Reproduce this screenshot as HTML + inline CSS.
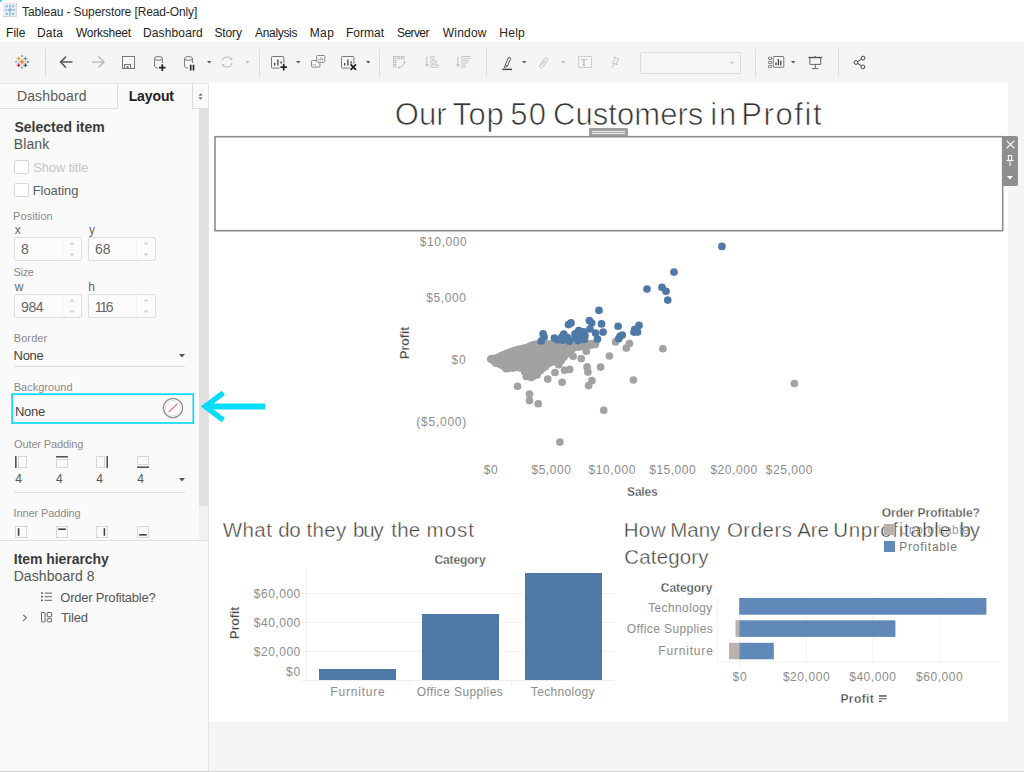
<!DOCTYPE html>
<html><head><meta charset="utf-8"><title>Tableau - Superstore [Read-Only]</title>
<style>
html,body{margin:0;padding:0;}
body{width:1024px;height:772px;overflow:hidden;background:#f5f5f5;position:relative;font-family:"Liberation Sans",sans-serif;}
.t{position:absolute;white-space:nowrap;line-height:1;}
.r{position:absolute;}
svg{position:absolute;overflow:visible;}
</style></head><body>
<div class="r" style="left:0px;top:0px;width:1024px;height:42px;background:#fff;"></div>
<div class="r" style="left:0px;top:42px;width:1024px;height:41px;background:#f5f5f5;"></div>
<div class="r" style="left:0px;top:83px;width:208px;height:689px;background:#fafafa;"></div>
<div class="r" style="left:208px;top:83px;width:1px;height:689px;background:#e4e4e4;"></div>
<div class="r" style="left:209px;top:83px;width:799px;height:639px;background:#fff;"></div>
<div class="r" style="left:0px;top:771px;width:1024px;height:1px;background:#d4d4d4;"></div>
<div class="r" style="left:0px;top:0px;width:2px;height:2px;background:#19d3f3;border-radius:0 0 2px 0;"></div>
<svg style="left:3px;top:3px" width="14" height="14" viewBox="0 0 14 14"><rect x="0" y="0" width="14" height="14" fill="#ececec"/><rect x="0" y="13" width="14" height="1" fill="#d0d0d0"/><rect x="13" y="0" width="1" height="14" fill="#d8d8d8"/><g fill="#7db4e6"><rect x="6.3" y="1.5" width="1.4" height="3"/><rect x="6.3" y="9.5" width="1.4" height="3"/><rect x="5" y="6.3" width="4" height="1.4"/><rect x="6.3" y="5" width="1.4" height="4"/><rect x="2" y="6.3" width="2.4" height="1.4"/><rect x="9.6" y="6.3" width="2.4" height="1.4"/><rect x="2.6" y="2.6" width="2.2" height="1.2"/><rect x="3.1" y="2.1" width="1.2" height="2.2"/><rect x="9.2" y="2.6" width="2.2" height="1.2"/><rect x="9.7" y="2.1" width="1.2" height="2.2"/><rect x="2.6" y="10.2" width="2.2" height="1.2"/><rect x="3.1" y="9.7" width="1.2" height="2.2"/><rect x="9.2" y="10.2" width="2.2" height="1.2"/><rect x="9.7" y="9.7" width="1.2" height="2.2"/></g></svg>
<div class="t" style="left:22.05px;top:6.00px;font-size:12px;color:#2a2a2a;letter-spacing:-0.113px;">Tableau - Superstore [Read-Only]</div>
<div class="t" style="left:6.00px;top:27.00px;font-size:12px;color:#222;letter-spacing:0.062px;">File</div>
<div class="t" style="left:37.00px;top:27.00px;font-size:12px;color:#222;letter-spacing:0.208px;">Data</div>
<div class="t" style="left:75.94px;top:27.00px;font-size:12px;color:#222;letter-spacing:-0.250px;">Worksheet</div>
<div class="t" style="left:143.00px;top:27.00px;font-size:12px;color:#222;letter-spacing:0.133px;">Dashboard</div>
<div class="t" style="left:214.44px;top:27.00px;font-size:12px;color:#222;letter-spacing:-0.109px;">Story</div>
<div class="t" style="left:255.00px;top:27.00px;font-size:12px;color:#222;letter-spacing:-0.321px;">Analysis</div>
<div class="t" style="left:309.70px;top:27.00px;font-size:12px;color:#222;letter-spacing:0.412px;">Map</div>
<div class="t" style="left:346.00px;top:27.00px;font-size:12px;color:#222;letter-spacing:0.013px;">Format</div>
<div class="t" style="left:396.94px;top:27.00px;font-size:12px;color:#222;letter-spacing:-0.565px;">Server</div>
<div class="t" style="left:442.74px;top:27.00px;font-size:12px;color:#222;letter-spacing:0.215px;">Window</div>
<div class="t" style="left:499.20px;top:27.00px;font-size:12px;color:#222;letter-spacing:0.304px;">Help</div>
<div class="r" style="left:45px;top:49px;width:1px;height:28px;background:#dedede;"></div>
<div class="r" style="left:259px;top:49px;width:1px;height:28px;background:#dedede;"></div>
<div class="r" style="left:379px;top:49px;width:1px;height:28px;background:#dedede;"></div>
<div class="r" style="left:485.5px;top:49px;width:1px;height:28px;background:#dedede;"></div>
<div class="r" style="left:755px;top:49px;width:1px;height:28px;background:#dedede;"></div>
<div class="r" style="left:838px;top:49px;width:1px;height:28px;background:#dedede;"></div>
<svg style="left:14px;top:54px" width="16" height="16" viewBox="0 0 16 16"><path d="M5.4 7.9 H10.6 M8 5.3 V10.5" stroke="#e8762d" stroke-width="1.3"/><path d="M2.7 4.6 H6.5 M4.6 2.7 V6.5" stroke="#eb9c3b" stroke-width="1.1"/><path d="M9.5 4.6 H13.3 M11.4 2.7 V6.5" stroke="#5b9fb5" stroke-width="1.1"/><path d="M2.7 11.2 H6.5 M4.6 9.3 V13.1" stroke="#c72035" stroke-width="1.1"/><path d="M9.5 11.2 H13.3 M11.4 9.3 V13.1" stroke="#1f447e" stroke-width="1.1"/><path d="M6.8 2.1 H9.2 M8 0.9 V3.3" stroke="#6aa3b8" stroke-width="0.9"/><path d="M6.8 13.7 H9.2 M8 12.5 V14.9" stroke="#7b8fb5" stroke-width="0.9"/><path d="M1 7.9 H3.4 M2.2 6.7 V9.1" stroke="#7fa8c9" stroke-width="0.9"/><path d="M12.6 7.9 H15 M13.8 6.7 V9.1" stroke="#59649b" stroke-width="0.9"/></svg>
<svg style="left:59px;top:55px" width="15" height="14" viewBox="0 0 15 14"><path d="M13.5 7.1 H1.6 M7 1.6 L1.5 7.1 L7 12.6" stroke="#5a5a5a" stroke-width="1.5" fill="none"/></svg>
<svg style="left:90.5px;top:55px" width="15" height="14" viewBox="0 0 15 14"><path d="M1 7.1 H12.9 M7.5 1.6 L13 7.1 L7.5 12.6" stroke="#b4b4b4" stroke-width="1.4" fill="none"/></svg>
<svg style="left:122px;top:56px" width="13" height="13" viewBox="0 0 13 13"><rect x="0.5" y="0.5" width="12" height="12" fill="none" stroke="#777" stroke-width="1"/><rect x="2.5" y="8.5" width="6" height="4" fill="none" stroke="#777" stroke-width="1"/><rect x="4.5" y="10" width="2" height="2" fill="#777"/></svg>
<svg style="left:154px;top:55.6px" width="14" height="16" viewBox="0 0 14 16"><path d="M0.6 2.4 V10 C0.6 11.3 2.2 12 4 12.1 M8.4 2.4 V7" fill="none" stroke="#777" stroke-width="1"/><ellipse cx="4.5" cy="2.4" rx="3.9" ry="1.9" fill="none" stroke="#777" stroke-width="1"/><path d="M5 11.6 H11.6 M8.3 8.3 V14.9" stroke="#222" stroke-width="1.7"/></svg>
<svg style="left:184px;top:55.6px" width="14" height="16" viewBox="0 0 14 16"><path d="M0.6 2.4 V10 C0.6 11.3 2.2 12 4 12.1 M8.4 2.4 V7" fill="none" stroke="#777" stroke-width="1"/><ellipse cx="4.5" cy="2.4" rx="3.9" ry="1.9" fill="none" stroke="#777" stroke-width="1"/><path d="M6.7 8.8 V14.6 M9.5 8.8 V14.6" stroke="#222" stroke-width="1.6"/></svg>
<svg style="left:206.5px;top:61px" width="4.4" height="2.6" viewBox="0 0 4.4 2.6"><path d="M0 0 L4.4 0 L2.2 2.6Z" fill="#555"/></svg>
<svg style="left:220px;top:55px" width="14" height="14" viewBox="0 0 14 14"><path d="M2 6 A5.2 5.2 0 0 1 11.6 4.6 M12 8 A5.2 5.2 0 0 1 2.4 9.4" fill="none" stroke="#bdbdbd" stroke-width="1.1"/><path d="M12.6 2.4 L11.8 5.2 L9.2 4.2Z M1.4 11.6 L2.2 8.8 L4.8 9.8Z" fill="#bdbdbd"/></svg>
<svg style="left:244.8px;top:61px" width="4.4" height="2.6" viewBox="0 0 4.4 2.6"><path d="M0 0 L4.4 0 L2.2 2.6Z" fill="#bdbdbd"/></svg>
<svg style="left:271px;top:56px" width="17" height="16" viewBox="0 0 17 16"><rect x="0.5" y="0.5" width="12.4" height="11.6" rx="0.8" fill="none" stroke="#777" stroke-width="1"/><path d="M3.6 9.6 V7 M6.9 9.6 V3.6 M10.1 9.6 V5.2" stroke="#444" stroke-width="1.3"/><rect x="8.6" y="7.6" width="8" height="8" fill="#f5f5f5"/><path d="M9.4 11.2 H16 M12.7 7.9 V14.5" stroke="#222" stroke-width="1.7"/></svg>
<svg style="left:296px;top:61.2px" width="4.4" height="2.6" viewBox="0 0 4.4 2.6"><path d="M0 0 L4.4 0 L2.2 2.6Z" fill="#555"/></svg>
<svg style="left:311px;top:55px" width="15" height="13" viewBox="0 0 15 13"><rect x="0.5" y="5.5" width="8.4" height="6.6" rx="0.8" fill="none" stroke="#8a8a8a" stroke-width="1"/><rect x="5.6" y="0.5" width="8.2" height="6.8" rx="0.8" fill="#f5f5f5" stroke="#8a8a8a" stroke-width="1"/><path d="M8 5.4 V3.8 M9.8 5.4 V2.4 M11.6 5.4 V3.2 M2.8 10.4 V9 M4.6 10.4 V9.2" stroke="#8a8a8a" stroke-width="0.9"/></svg>
<svg style="left:341px;top:56px" width="17" height="16" viewBox="0 0 17 16"><rect x="0.5" y="0.5" width="12.4" height="11.6" rx="0.8" fill="none" stroke="#777" stroke-width="1"/><path d="M3.6 9.6 V7 M6.9 9.6 V3.6 M10.1 9.6 V5.2" stroke="#444" stroke-width="1.3"/><rect x="8.6" y="7.6" width="8" height="8" fill="#f5f5f5"/><path d="M9.6 8.4 L15 13.8 M15 8.4 L9.6 13.8" stroke="#222" stroke-width="1.8"/></svg>
<svg style="left:365.6px;top:61.2px" width="4.4" height="2.6" viewBox="0 0 4.4 2.6"><path d="M0 0 L4.4 0 L2.2 2.6Z" fill="#555"/></svg>
<svg style="left:393.4px;top:56.2px" width="14" height="14" viewBox="0 0 14 14"><rect x="0.5" y="0.5" width="2.4" height="2.4" fill="none" stroke="#bdbdbd" stroke-width="0.9"/><rect x="4.5" y="0.5" width="2.4" height="2.4" fill="none" stroke="#bdbdbd" stroke-width="0.9"/><rect x="8.5" y="0.5" width="2.4" height="2.4" fill="none" stroke="#bdbdbd" stroke-width="0.9"/><rect x="0.5" y="4.5" width="2.4" height="2.4" fill="none" stroke="#bdbdbd" stroke-width="0.9"/><rect x="0.5" y="8.5" width="2.4" height="2.4" fill="none" stroke="#bdbdbd" stroke-width="0.9"/><path d="M5.4 11.6 C9 11 11 9 11.6 6" fill="none" stroke="#bdbdbd" stroke-width="1"/><path d="M4.2 11.8 L6.6 10.2 L6.8 12.8Z M11.8 4.6 L10 6.8 L13 7Z" fill="#bdbdbd"/></svg>
<svg style="left:425px;top:56.4px" width="16" height="12" viewBox="0 0 16 12"><path d="M1.9 0.5 V10" stroke="#bdbdbd" stroke-width="1"/><path d="M0 8.2 L3.8 8.2 L1.9 11.2Z" fill="#bdbdbd"/><rect x="5.5" y="0.5" width="3.6" height="2.4" rx="0.7" fill="none" stroke="#bdbdbd" stroke-width="0.9"/><rect x="5.5" y="4.7" width="6" height="2.4" rx="0.7" fill="none" stroke="#bdbdbd" stroke-width="0.9"/><rect x="5.5" y="8.9" width="8.2" height="2.4" rx="0.7" fill="none" stroke="#bdbdbd" stroke-width="0.9"/></svg>
<svg style="left:456.2px;top:56.4px" width="16" height="12" viewBox="0 0 16 12"><path d="M1.9 0.5 V10" stroke="#bdbdbd" stroke-width="1"/><path d="M0 8.2 L3.8 8.2 L1.9 11.2Z" fill="#bdbdbd"/><rect x="5.5" y="0.5" width="8.6" height="2.4" rx="0.7" fill="none" stroke="#bdbdbd" stroke-width="0.9"/><rect x="5.5" y="4.7" width="6.2" height="2.4" rx="0.7" fill="none" stroke="#bdbdbd" stroke-width="0.9"/><rect x="5.5" y="8.9" width="3.8" height="2.4" rx="0.7" fill="none" stroke="#bdbdbd" stroke-width="0.9"/></svg>
<svg style="left:502px;top:56px" width="11" height="15" viewBox="0 0 11 15"><path d="M3.2 9.2 L6.6 1.2 L8.8 2.2 L5.4 10.2Z" fill="none" stroke="#5a5a5a" stroke-width="1"/><path d="M3.2 9.2 L2.2 11.4 L4 11.2 L5.4 10.2" fill="none" stroke="#5a5a5a" stroke-width="0.9"/><path d="M0.3 13.4 H10" stroke="#444" stroke-width="1.5"/></svg>
<svg style="left:522.1px;top:61.1px" width="4.4" height="2.6" viewBox="0 0 4.4 2.6"><path d="M0 0 L4.4 0 L2.2 2.6Z" fill="#555"/></svg>
<svg style="left:538px;top:55.5px" width="12" height="13" viewBox="0 0 12 13"><path d="M2.4 9.2 L7 2.4 C8.2 0.7 10.8 2.2 9.6 4.2 L5 11 C3.6 13 0.6 11.2 2 9 L6.2 3.2" fill="none" stroke="#bdbdbd" stroke-width="0.9"/><path d="M4 9.4 L7.8 3.8" fill="none" stroke="#bdbdbd" stroke-width="0.8"/></svg>
<svg style="left:561.2px;top:61.1px" width="4.4" height="2.6" viewBox="0 0 4.4 2.6"><path d="M0 0 L4.4 0 L2.2 2.6Z" fill="#bdbdbd"/></svg>
<svg style="left:578px;top:56px" width="14" height="12" viewBox="0 0 14 12"><rect x="0.5" y="0.5" width="13" height="11" fill="none" stroke="#b4b4b4" stroke-width="1" stroke-dasharray="1.5 1"/></svg>
<div class="t" style="left:580.6px;top:56.6px;font-size:11px;color:#b0b0b0;font-family:'Liberation Serif',serif;">T</div>
<svg style="left:608.5px;top:55.5px" width="11" height="13" viewBox="0 0 11 13"><path d="M5.2 0.8 L10 3.4 L8.8 4.4 L7.6 7.2 L8.2 8.8 L3 6.6 L4.8 5.8 L6 3 Z M5.4 7.8 L2.6 12" fill="none" stroke="#bdbdbd" stroke-width="0.9" stroke-linejoin="round"/></svg>
<div class="r" style="left:640px;top:52px;width:99px;height:19.5px;background:#f6f6f6;border:1px solid #dcdcdc;border-radius:2px;"></div>
<svg style="left:729.7px;top:61.5px" width="4.4" height="2.6" viewBox="0 0 4.4 2.6"><path d="M0 0 L4.4 0 L2.2 2.6Z" fill="#c8c8c8"/></svg>
<svg style="left:768px;top:56px" width="17" height="12" viewBox="0 0 17 12"><rect x="0.5" y="1.2" width="3" height="2.2" rx="0.3" fill="none" stroke="#777" stroke-width="0.9"/><rect x="0.5" y="5.4" width="3" height="2.2" rx="0.3" fill="none" stroke="#777" stroke-width="0.9"/><rect x="0.5" y="9.4" width="3" height="2.2" rx="0.3" fill="none" stroke="#777" stroke-width="0.9"/><rect x="5.2" y="0.5" width="10.6" height="10.8" rx="0.8" fill="none" stroke="#777" stroke-width="1"/><path d="M8 9.2 V6.6 M10.4 9.2 V3 M12.8 9.2 V4.8" stroke="#444" stroke-width="1.3"/></svg>
<svg style="left:791.2px;top:61.2px" width="4.4" height="2.6" viewBox="0 0 4.4 2.6"><path d="M0 0 L4.4 0 L2.2 2.6Z" fill="#555"/></svg>
<svg style="left:808px;top:55.5px" width="15" height="14" viewBox="0 0 15 14"><path d="M0.4 1.5 H14.2" stroke="#555" stroke-width="1.4"/><path d="M1.9 2 V8.4 H12.7 V2" fill="none" stroke="#666" stroke-width="1"/><path d="M7.3 8.4 V12.4 M4.2 12.6 H10.4" stroke="#666" stroke-width="1"/><path d="M7.3 0 V1.4" stroke="#555" stroke-width="1"/></svg>
<svg style="left:853px;top:55px" width="14" height="15" viewBox="0 0 14 15"><path d="M3.2 7.5 L10 3.2 M3.2 7.5 L10 11.8" stroke="#444" stroke-width="1"/><circle cx="10.1" cy="3.1" r="1.9" fill="#f5f5f5" stroke="#444" stroke-width="1"/><circle cx="3" cy="7.5" r="1.9" fill="#f5f5f5" stroke="#444" stroke-width="1"/><circle cx="9.9" cy="11.9" r="1.9" fill="#f5f5f5" stroke="#444" stroke-width="1"/></svg>
<div class="r" style="left:0px;top:108px;width:118px;height:1px;background:#dcdcdc;"></div>
<div class="r" style="left:117px;top:84px;width:1px;height:25px;background:#dcdcdc;"></div>
<div class="r" style="left:192px;top:84px;width:1px;height:25px;background:#dcdcdc;"></div>
<div class="r" style="left:192px;top:108px;width:17px;height:1px;background:#dcdcdc;"></div>
<div class="r" style="left:0px;top:83px;width:209px;height:1px;background:#e6e6e6;"></div>
<div class="t" style="left:16.88px;top:89.00px;font-size:14px;color:#5a5a5a;letter-spacing:0.145px;">Dashboard</div>
<div class="t" style="left:128.66px;top:89.00px;font-size:14px;color:#222;font-weight:bold;letter-spacing:-0.103px;">Layout</div>
<svg style="left:198px;top:92.5px" width="5" height="7" viewBox="0 0 5 7"><path d="M0.4 2.6 L2.5 0.4 L4.6 2.6Z M0.4 4.4 L2.5 6.6 L4.6 4.4Z" fill="#556"/></svg>
<div class="r" style="left:199px;top:109px;width:9px;height:431px;background:#f1f1f1;"></div>
<div class="r" style="left:199px;top:109px;width:9px;height:397px;background:#e0e0e0;"></div>
<div class="t" style="left:14.43px;top:120.00px;font-size:14px;color:#3a3a3a;font-weight:bold;letter-spacing:0.000px;">Selected item</div>
<div class="t" style="left:13.68px;top:137.00px;font-size:14px;color:#555;letter-spacing:0.131px;">Blank</div>
<div class="r" style="left:14px;top:160px;width:13px;height:12px;background:#fff;border:1px solid #d8d8d8;border-radius:2px;"></div>
<div class="r" style="left:14px;top:183px;width:13px;height:12px;background:#fff;border:1px solid #d8d8d8;border-radius:2px;"></div>
<div class="t" style="left:33.17px;top:161.00px;font-size:13px;color:#c4c4c4;letter-spacing:-0.132px;">Show title</div>
<div class="t" style="left:32.74px;top:184.00px;font-size:13px;color:#5c5c5c;letter-spacing:-0.087px;">Floating</div>
<div class="t" style="left:13.12px;top:211.00px;font-size:11px;color:#8a8a8a;letter-spacing:0.062px;">Position</div>
<div class="t" style="left:14.68px;top:224.00px;font-size:12px;color:#666;">x</div>
<div class="t" style="left:88.94px;top:224.00px;font-size:12px;color:#666;">y</div>
<div class="r" style="left:14px;top:237px;width:66px;height:22px;background:#fcfcfc;border:1px solid #ddd;border-radius:2px;"></div>
<div class="r" style="left:62px;top:238px;width:1px;height:22px;background:#f3f3f3;"></div>
<svg style="left:69px;top:241px" width="6" height="16" viewBox="0 0 6 16"><path d="M0.5 3.5 L3 0.8 L5.5 3.5Z M0.5 12.5 L3 15.2 L5.5 12.5Z" fill="#d2d2d2"/></svg>
<div class="t" style="left:21.12px;top:242.00px;font-size:14px;color:#666;">8</div>
<div class="r" style="left:88px;top:237px;width:66px;height:22px;background:#fcfcfc;border:1px solid #ddd;border-radius:2px;"></div>
<div class="r" style="left:136px;top:238px;width:1px;height:22px;background:#f3f3f3;"></div>
<svg style="left:143px;top:241px" width="6" height="16" viewBox="0 0 6 16"><path d="M0.5 3.5 L3 0.8 L5.5 3.5Z M0.5 12.5 L3 15.2 L5.5 12.5Z" fill="#d2d2d2"/></svg>
<div class="t" style="left:95.06px;top:242.00px;font-size:14px;color:#666;letter-spacing:-0.012px;">68</div>
<div class="t" style="left:13.50px;top:267.00px;font-size:11px;color:#8a8a8a;letter-spacing:-0.312px;">Size</div>
<div class="t" style="left:14.80px;top:281.00px;font-size:12px;color:#666;">w</div>
<div class="t" style="left:88.19px;top:281.00px;font-size:12px;color:#666;">h</div>
<div class="r" style="left:14px;top:294px;width:66px;height:22px;background:#fcfcfc;border:1px solid #ddd;border-radius:2px;"></div>
<div class="r" style="left:62px;top:295px;width:1px;height:22px;background:#f3f3f3;"></div>
<svg style="left:69px;top:298px" width="6" height="16" viewBox="0 0 6 16"><path d="M0.5 3.5 L3 0.8 L5.5 3.5Z M0.5 12.5 L3 15.2 L5.5 12.5Z" fill="#d2d2d2"/></svg>
<div class="t" style="left:21.12px;top:300.00px;font-size:14px;color:#666;letter-spacing:-0.456px;">984</div>
<div class="r" style="left:88px;top:294px;width:66px;height:22px;background:#fcfcfc;border:1px solid #ddd;border-radius:2px;"></div>
<div class="r" style="left:136px;top:295px;width:1px;height:22px;background:#f3f3f3;"></div>
<svg style="left:143px;top:298px" width="6" height="16" viewBox="0 0 6 16"><path d="M0.5 3.5 L3 0.8 L5.5 3.5Z M0.5 12.5 L3 15.2 L5.5 12.5Z" fill="#d2d2d2"/></svg>
<div class="t" style="left:94.69px;top:300.00px;font-size:14px;color:#666;letter-spacing:-1.744px;">116</div>
<div class="t" style="left:13.72px;top:333.00px;font-size:11px;color:#8a8a8a;letter-spacing:0.100px;">Border</div>
<div class="t" style="left:13.54px;top:349.00px;font-size:13px;color:#444;letter-spacing:-0.267px;">None</div>
<svg style="left:179px;top:354px" width="6" height="4" viewBox="0 0 6 4"><path d="M0 0 L6 0 L3 3.6Z" fill="#555"/></svg>
<div class="r" style="left:14px;top:366px;width:171px;height:1px;background:#dcdcdc;"></div>
<div class="t" style="left:13.72px;top:382.00px;font-size:11px;color:#8a8a8a;letter-spacing:0.008px;">Background</div>
<svg style="left:0;top:0" width="210" height="772" viewBox="0 0 210 772"><rect x="12.1" y="394.1" width="181.2" height="28.9" fill="none" stroke="#10d8f8" stroke-width="1.7"/></svg>
<div class="t" style="left:15.04px;top:405.00px;font-size:13px;color:#444;letter-spacing:-0.333px;">None</div>
<svg style="left:162px;top:397px" width="22" height="22" viewBox="0 0 22 22"><circle cx="11" cy="11" r="9.6" fill="#fff" stroke="#909090" stroke-width="1.4"/><circle cx="11" cy="11" r="7.6" fill="none" stroke="#e2e2e2" stroke-width="1"/><path d="M6.8 14.8 L15.4 6.6" stroke="#e0606a" stroke-width="1.1"/></svg>
<svg style="left:0;top:0" width="300" height="772" viewBox="0 0 300 772"><path d="M204 406.5 H265" stroke="#08dcf8" stroke-width="6" fill="none"/><path d="M223.3 392.8 L205.2 406.5 L223.3 420.2" stroke="#08dcf8" stroke-width="5.4" fill="none" stroke-linejoin="miter"/></svg>
<div class="t" style="left:14.10px;top:439.00px;font-size:11px;color:#8a8a8a;letter-spacing:-0.146px;">Outer Padding</div>
<svg style="left:15px;top:456.3px" width="13" height="13" viewBox="0 0 13 13"><rect x="3.5" y="0.5" width="8" height="11" fill="none" stroke="#d6d6d6" stroke-width="1"/><path d="M0.8 0 L0.8 12" stroke="#555" stroke-width="1.6"/></svg>
<div class="t" style="left:15.35px;top:473.00px;font-size:12px;color:#555;">4</div>
<svg style="left:15px;top:526.2px" width="13" height="13" viewBox="0 0 13 13"><rect x="0.5" y="0.5" width="11" height="11" fill="none" stroke="#d6d6d6" stroke-width="1"/><path d="M3.6 2.2 L3.6 9.8" stroke="#444" stroke-width="1.6"/></svg>
<svg style="left:55.6px;top:456.3px" width="13" height="13" viewBox="0 0 13 13"><rect x="0.5" y="3.5" width="11" height="8" fill="none" stroke="#d6d6d6" stroke-width="1"/><path d="M0 0.8 L12 0.8" stroke="#555" stroke-width="1.6"/></svg>
<div class="t" style="left:55.95px;top:473.00px;font-size:12px;color:#555;">4</div>
<svg style="left:55.6px;top:526.2px" width="13" height="13" viewBox="0 0 13 13"><rect x="0.5" y="0.5" width="11" height="11" fill="none" stroke="#d6d6d6" stroke-width="1"/><path d="M2.2 3.2 L9.8 3.2" stroke="#444" stroke-width="1.6"/></svg>
<svg style="left:96px;top:456.3px" width="13" height="13" viewBox="0 0 13 13"><rect x="0.5" y="0.5" width="8" height="11" fill="none" stroke="#d6d6d6" stroke-width="1"/><path d="M11.2 0 L11.2 12" stroke="#555" stroke-width="1.6"/></svg>
<div class="t" style="left:96.35px;top:473.00px;font-size:12px;color:#555;">4</div>
<svg style="left:96px;top:526.2px" width="13" height="13" viewBox="0 0 13 13"><rect x="0.5" y="0.5" width="11" height="11" fill="none" stroke="#d6d6d6" stroke-width="1"/><path d="M8.4 2.2 L8.4 9.8" stroke="#444" stroke-width="1.6"/></svg>
<svg style="left:136.8px;top:456.3px" width="13" height="13" viewBox="0 0 13 13"><rect x="0.5" y="0.5" width="11" height="8" fill="none" stroke="#d6d6d6" stroke-width="1"/><path d="M0 11.2 L12 11.2" stroke="#555" stroke-width="1.6"/></svg>
<div class="t" style="left:137.15px;top:473.00px;font-size:12px;color:#555;">4</div>
<svg style="left:136.8px;top:526.2px" width="13" height="13" viewBox="0 0 13 13"><rect x="0.5" y="0.5" width="11" height="11" fill="none" stroke="#d6d6d6" stroke-width="1"/><path d="M2.2 8.8 L9.8 8.8" stroke="#444" stroke-width="1.6"/></svg>
<svg style="left:179px;top:477.5px" width="6" height="4" viewBox="0 0 6 4"><path d="M0 0 L6 0 L3 3.6Z" fill="#555"/></svg>
<div class="r" style="left:14px;top:492px;width:171px;height:1px;background:#dcdcdc;"></div>
<div class="t" style="left:13.60px;top:508.00px;font-size:11px;color:#8a8a8a;letter-spacing:-0.118px;">Inner Padding</div>
<div class="r" style="left:0px;top:540px;width:208px;height:1px;background:#dedede;"></div>
<div class="t" style="left:13.86px;top:552.00px;font-size:14px;color:#3a3a3a;font-weight:bold;letter-spacing:-0.061px;">Item hierarchy</div>
<div class="t" style="left:13.68px;top:569.00px;font-size:14px;color:#555;letter-spacing:0.076px;">Dashboard 8</div>
<svg style="left:41px;top:592px" width="12" height="10" viewBox="0 0 12 10"><g fill="#666"><rect x="0" y="0.3" width="2" height="1.6"/><rect x="0" y="3.9" width="2" height="1.6"/><rect x="0" y="7.5" width="2" height="1.6"/><rect x="3.6" y="0.6" width="7.6" height="1"/><rect x="3.6" y="4.2" width="7.6" height="1"/><rect x="3.6" y="7.8" width="7.6" height="1"/></g></svg>
<div class="t" style="left:60.27px;top:591.00px;font-size:13px;color:#555;letter-spacing:-0.217px;">Order Profitable?</div>
<svg style="left:22px;top:614px" width="6" height="8" viewBox="0 0 6 8"><path d="M1.2 0.8 L4.4 3.8 L1.2 6.8" stroke="#666" stroke-width="1.1" fill="none"/></svg>
<svg style="left:41px;top:611.5px" width="12" height="11" viewBox="0 0 12 11"><g fill="none" stroke="#666" stroke-width="1"><rect x="0.5" y="0.5" width="3.6" height="9.4" rx="0.6"/><rect x="6.2" y="0.5" width="4.4" height="4.2" rx="0.6"/><rect x="6.2" y="6.6" width="4.4" height="3.3" rx="0.6"/></g></svg>
<div class="t" style="left:60.99px;top:611.00px;font-size:13px;color:#555;letter-spacing:-0.150px;">Tiled</div>
<div class="t" style="left:0;top:99.00px;font-size:31px;color:#333;-webkit-text-stroke:0.7px #fff;"><span style="position:absolute;left:394.76px;top:0;letter-spacing:0.075px">Our</span> <span style="position:absolute;left:452.41px;top:0;letter-spacing:0.700px">Top</span> <span style="position:absolute;left:510.25px;top:0;letter-spacing:1.337px">50</span> <span style="position:absolute;left:553.04px;top:0;letter-spacing:0.052px">Customers</span> <span style="position:absolute;left:710.24px;top:0;letter-spacing:1.938px">in</span> <span style="position:absolute;left:741.24px;top:0;letter-spacing:1.587px">Profit</span></div>
<div class="r" style="left:589px;top:128px;width:39px;height:9px;background:#a0a0a0;border-radius:1px 1px 0 0;"></div>
<div class="r" style="left:592px;top:130.5px;width:33px;height:1px;background:#f0f0f0;"></div>
<div class="r" style="left:592px;top:133px;width:33px;height:1px;background:#f0f0f0;"></div>
<svg style="left:0;top:0" width="1024" height="300" viewBox="0 0 1024 300"><rect x="215" y="136.7" width="787.7" height="94" fill="#fff" stroke="#8c8c8c" stroke-width="1.6"/></svg>
<div class="r" style="left:1003px;top:136px;width:15px;height:49.6px;background:#8e8e8e;border-radius:0 2px 2px 0;"></div>
<svg style="left:1005.5px;top:139.5px" width="9" height="9" viewBox="0 0 9 9"><path d="M0.6 0.6 L8.4 8.4 M8.4 0.6 L0.6 8.4" stroke="#fff" stroke-width="1.1"/></svg>
<svg style="left:1006px;top:154.5px" width="8" height="12" viewBox="0 0 8 12"><path d="M1.6 0.6 H6.4 M2.4 0.6 V5 M5.6 0.6 V5 M0.4 5.4 H7.6 M4 5.6 V11" stroke="#fff" stroke-width="1" fill="none"/></svg>
<svg style="left:1007px;top:175.5px" width="6" height="4" viewBox="0 0 6 4"><path d="M0 0 L6 0 L3 3.4Z" fill="#fff"/></svg>
<div class="t" style="left:419.77px;top:236.00px;font-size:12px;color:#8c8c8c;letter-spacing:0.608px;">$10,000</div>
<div class="t" style="left:426.27px;top:292.00px;font-size:12px;color:#8c8c8c;letter-spacing:0.608px;">$5,000</div>
<div class="t" style="left:451.62px;top:354.00px;font-size:12px;color:#8c8c8c;letter-spacing:0.800px;">$0</div>
<div class="t" style="left:416.35px;top:416.00px;font-size:12px;color:#8c8c8c;letter-spacing:0.745px;">($5,000)</div>
<div class="t" style="left:483.77px;top:464.00px;font-size:12px;color:#8c8c8c;letter-spacing:0.650px;">$0</div>
<div class="t" style="left:531.48px;top:464.00px;font-size:12px;color:#8c8c8c;letter-spacing:0.527px;">$5,000</div>
<div class="t" style="left:588.58px;top:464.00px;font-size:12px;color:#8c8c8c;letter-spacing:0.575px;">$10,000</div>
<div class="t" style="left:649.27px;top:464.00px;font-size:12px;color:#8c8c8c;letter-spacing:0.492px;">$15,000</div>
<div class="t" style="left:710.38px;top:464.00px;font-size:12px;color:#8c8c8c;letter-spacing:0.558px;">$20,000</div>
<div class="t" style="left:765.67px;top:464.00px;font-size:12px;color:#8c8c8c;letter-spacing:0.575px;">$25,000</div>
<div class="t" style="left:627.12px;top:486.00px;font-size:12px;color:#484848;font-weight:bold;letter-spacing:-0.225px;-webkit-text-stroke:0.3px #fff;">Sales</div>
<div class="t" style="left:404.10px;top:343.10px;font-size:13px;color:#484848;font-weight:bold;-webkit-text-stroke:0.3px #fff;letter-spacing:-0.308px;transform:translate(-50%,-50%) rotate(-90deg);">Profit</div>
<svg style="left:0;top:0" width="1024" height="772" viewBox="0 0 1024 772"><g fill="#a2a2a2"><circle cx="491" cy="359" r="3.85"/><circle cx="491" cy="359" r="3.85"/><circle cx="493.6" cy="358.6" r="3.85"/><circle cx="493.6" cy="360.7" r="3.85"/><circle cx="496.2" cy="358.2" r="3.85"/><circle cx="496.2" cy="360.8" r="3.85"/><circle cx="496.2" cy="362.4" r="3.85"/><circle cx="498.8" cy="357" r="3.85"/><circle cx="498.8" cy="359.6" r="3.85"/><circle cx="498.8" cy="362.2" r="3.85"/><circle cx="498.8" cy="363.8" r="3.85"/><circle cx="501.4" cy="355.7" r="3.85"/><circle cx="501.4" cy="358.3" r="3.85"/><circle cx="501.4" cy="360.9" r="3.85"/><circle cx="501.4" cy="363.5" r="3.85"/><circle cx="501.4" cy="365.1" r="3.85"/><circle cx="504" cy="354.5" r="3.85"/><circle cx="504" cy="357.1" r="3.85"/><circle cx="504" cy="359.7" r="3.85"/><circle cx="504" cy="362.3" r="3.85"/><circle cx="504" cy="364.9" r="3.85"/><circle cx="504" cy="366.5" r="3.85"/><circle cx="506.6" cy="353.4" r="3.85"/><circle cx="506.6" cy="356" r="3.85"/><circle cx="506.6" cy="358.6" r="3.85"/><circle cx="506.6" cy="361.2" r="3.85"/><circle cx="506.6" cy="363.8" r="3.85"/><circle cx="506.6" cy="366.4" r="3.85"/><circle cx="506.6" cy="367.8" r="3.85"/><circle cx="509.2" cy="352.5" r="3.85"/><circle cx="509.2" cy="355.1" r="3.85"/><circle cx="509.2" cy="357.7" r="3.85"/><circle cx="509.2" cy="360.3" r="3.85"/><circle cx="509.2" cy="362.9" r="3.85"/><circle cx="509.2" cy="365.5" r="3.85"/><circle cx="509.2" cy="368.1" r="3.85"/><circle cx="511.8" cy="351.6" r="3.85"/><circle cx="511.8" cy="354.2" r="3.85"/><circle cx="511.8" cy="356.8" r="3.85"/><circle cx="511.8" cy="359.4" r="3.85"/><circle cx="511.8" cy="362" r="3.85"/><circle cx="511.8" cy="364.6" r="3.85"/><circle cx="511.8" cy="367.2" r="3.85"/><circle cx="514.4" cy="350.7" r="3.85"/><circle cx="514.4" cy="353.3" r="3.85"/><circle cx="514.4" cy="355.9" r="3.85"/><circle cx="514.4" cy="358.5" r="3.85"/><circle cx="514.4" cy="361.1" r="3.85"/><circle cx="514.4" cy="363.7" r="3.85"/><circle cx="514.4" cy="366.3" r="3.85"/><circle cx="514.4" cy="366.6" r="3.85"/><circle cx="517" cy="349.8" r="3.85"/><circle cx="517" cy="352.4" r="3.85"/><circle cx="517" cy="355" r="3.85"/><circle cx="517" cy="357.6" r="3.85"/><circle cx="517" cy="360.2" r="3.85"/><circle cx="517" cy="362.8" r="3.85"/><circle cx="517" cy="365.4" r="3.85"/><circle cx="517" cy="367.2" r="3.85"/><circle cx="519.6" cy="349.1" r="3.85"/><circle cx="519.6" cy="351.7" r="3.85"/><circle cx="519.6" cy="354.3" r="3.85"/><circle cx="519.6" cy="356.9" r="3.85"/><circle cx="519.6" cy="359.5" r="3.85"/><circle cx="519.6" cy="362.1" r="3.85"/><circle cx="519.6" cy="364.7" r="3.85"/><circle cx="519.6" cy="367.3" r="3.85"/><circle cx="519.6" cy="367.7" r="3.85"/><circle cx="522.2" cy="348.6" r="3.85"/><circle cx="522.2" cy="351.2" r="3.85"/><circle cx="522.2" cy="353.8" r="3.85"/><circle cx="522.2" cy="356.4" r="3.85"/><circle cx="522.2" cy="359" r="3.85"/><circle cx="522.2" cy="361.6" r="3.85"/><circle cx="522.2" cy="364.2" r="3.85"/><circle cx="522.2" cy="366.8" r="3.85"/><circle cx="522.2" cy="368.3" r="3.85"/><circle cx="524.8" cy="348" r="3.85"/><circle cx="524.8" cy="350.6" r="3.85"/><circle cx="524.8" cy="353.2" r="3.85"/><circle cx="524.8" cy="355.8" r="3.85"/><circle cx="524.8" cy="358.4" r="3.85"/><circle cx="524.8" cy="361" r="3.85"/><circle cx="524.8" cy="363.6" r="3.85"/><circle cx="524.8" cy="366.2" r="3.85"/><circle cx="524.8" cy="368.8" r="3.85"/><circle cx="524.8" cy="371.4" r="3.85"/><circle cx="524.8" cy="371.8" r="3.85"/><circle cx="527.4" cy="347.3" r="3.85"/><circle cx="527.4" cy="349.9" r="3.85"/><circle cx="527.4" cy="352.5" r="3.85"/><circle cx="527.4" cy="355.1" r="3.85"/><circle cx="527.4" cy="357.7" r="3.85"/><circle cx="527.4" cy="360.3" r="3.85"/><circle cx="527.4" cy="362.9" r="3.85"/><circle cx="527.4" cy="365.5" r="3.85"/><circle cx="527.4" cy="368.1" r="3.85"/><circle cx="527.4" cy="370.7" r="3.85"/><circle cx="527.4" cy="373.3" r="3.85"/><circle cx="527.4" cy="374.9" r="3.85"/><circle cx="530" cy="346.2" r="3.85"/><circle cx="530" cy="348.8" r="3.85"/><circle cx="530" cy="351.4" r="3.85"/><circle cx="530" cy="354" r="3.85"/><circle cx="530" cy="356.6" r="3.85"/><circle cx="530" cy="359.2" r="3.85"/><circle cx="530" cy="361.8" r="3.85"/><circle cx="530" cy="364.4" r="3.85"/><circle cx="530" cy="367" r="3.85"/><circle cx="530" cy="369.6" r="3.85"/><circle cx="530" cy="372.2" r="3.85"/><circle cx="530" cy="374.8" r="3.85"/><circle cx="530" cy="376.5" r="3.85"/><circle cx="532.6" cy="345.1" r="3.85"/><circle cx="532.6" cy="347.7" r="3.85"/><circle cx="532.6" cy="350.3" r="3.85"/><circle cx="532.6" cy="352.9" r="3.85"/><circle cx="532.6" cy="355.5" r="3.85"/><circle cx="532.6" cy="358.1" r="3.85"/><circle cx="532.6" cy="360.7" r="3.85"/><circle cx="532.6" cy="363.3" r="3.85"/><circle cx="532.6" cy="365.9" r="3.85"/><circle cx="532.6" cy="368.5" r="3.85"/><circle cx="532.6" cy="371.1" r="3.85"/><circle cx="532.6" cy="373.7" r="3.85"/><circle cx="532.6" cy="376.3" r="3.85"/><circle cx="532.6" cy="376.6" r="3.85"/><circle cx="535.2" cy="344.4" r="3.85"/><circle cx="535.2" cy="347" r="3.85"/><circle cx="535.2" cy="349.6" r="3.85"/><circle cx="535.2" cy="352.2" r="3.85"/><circle cx="535.2" cy="354.8" r="3.85"/><circle cx="535.2" cy="357.4" r="3.85"/><circle cx="535.2" cy="360" r="3.85"/><circle cx="535.2" cy="362.6" r="3.85"/><circle cx="535.2" cy="365.2" r="3.85"/><circle cx="535.2" cy="367.8" r="3.85"/><circle cx="535.2" cy="370.4" r="3.85"/><circle cx="535.2" cy="373" r="3.85"/><circle cx="535.2" cy="374.7" r="3.85"/><circle cx="537.8" cy="344.2" r="3.85"/><circle cx="537.8" cy="346.8" r="3.85"/><circle cx="537.8" cy="349.4" r="3.85"/><circle cx="537.8" cy="352" r="3.85"/><circle cx="537.8" cy="354.6" r="3.85"/><circle cx="537.8" cy="357.2" r="3.85"/><circle cx="537.8" cy="359.8" r="3.85"/><circle cx="537.8" cy="362.4" r="3.85"/><circle cx="537.8" cy="365" r="3.85"/><circle cx="537.8" cy="367.6" r="3.85"/><circle cx="537.8" cy="370.2" r="3.85"/><circle cx="537.8" cy="372.7" r="3.85"/><circle cx="540.4" cy="344" r="3.85"/><circle cx="540.4" cy="346.6" r="3.85"/><circle cx="540.4" cy="349.2" r="3.85"/><circle cx="540.4" cy="351.8" r="3.85"/><circle cx="540.4" cy="354.4" r="3.85"/><circle cx="540.4" cy="357" r="3.85"/><circle cx="540.4" cy="359.6" r="3.85"/><circle cx="540.4" cy="362.2" r="3.85"/><circle cx="540.4" cy="364.8" r="3.85"/><circle cx="540.4" cy="367.4" r="3.85"/><circle cx="540.4" cy="370" r="3.85"/><circle cx="540.4" cy="370.5" r="3.85"/><circle cx="543" cy="344" r="3.85"/><circle cx="543" cy="346.6" r="3.85"/><circle cx="543" cy="349.2" r="3.85"/><circle cx="543" cy="351.8" r="3.85"/><circle cx="543" cy="354.4" r="3.85"/><circle cx="543" cy="357" r="3.85"/><circle cx="543" cy="359.6" r="3.85"/><circle cx="543" cy="362.2" r="3.85"/><circle cx="543" cy="364.8" r="3.85"/><circle cx="543" cy="367.4" r="3.85"/><circle cx="543" cy="368.2" r="3.85"/><circle cx="545.6" cy="344" r="3.85"/><circle cx="545.6" cy="346.6" r="3.85"/><circle cx="545.6" cy="349.2" r="3.85"/><circle cx="545.6" cy="351.8" r="3.85"/><circle cx="545.6" cy="354.4" r="3.85"/><circle cx="545.6" cy="357" r="3.85"/><circle cx="545.6" cy="359.6" r="3.85"/><circle cx="545.6" cy="362.2" r="3.85"/><circle cx="545.6" cy="364.8" r="3.85"/><circle cx="545.6" cy="366" r="3.85"/><circle cx="548.2" cy="344" r="3.85"/><circle cx="548.2" cy="346.6" r="3.85"/><circle cx="548.2" cy="349.2" r="3.85"/><circle cx="548.2" cy="351.8" r="3.85"/><circle cx="548.2" cy="354.4" r="3.85"/><circle cx="548.2" cy="357" r="3.85"/><circle cx="548.2" cy="359.6" r="3.85"/><circle cx="548.2" cy="362.2" r="3.85"/><circle cx="548.2" cy="363.8" r="3.85"/><circle cx="550.8" cy="344" r="3.85"/><circle cx="550.8" cy="346.6" r="3.85"/><circle cx="550.8" cy="349.2" r="3.85"/><circle cx="550.8" cy="351.8" r="3.85"/><circle cx="550.8" cy="354.4" r="3.85"/><circle cx="550.8" cy="357" r="3.85"/><circle cx="550.8" cy="359.6" r="3.85"/><circle cx="550.8" cy="361.7" r="3.85"/><circle cx="553.4" cy="344" r="3.85"/><circle cx="553.4" cy="346.6" r="3.85"/><circle cx="553.4" cy="349.2" r="3.85"/><circle cx="553.4" cy="351.8" r="3.85"/><circle cx="553.4" cy="354.4" r="3.85"/><circle cx="553.4" cy="357" r="3.85"/><circle cx="553.4" cy="359.6" r="3.85"/><circle cx="553.4" cy="361.6" r="3.85"/><circle cx="556" cy="344" r="3.85"/><circle cx="556" cy="346.6" r="3.85"/><circle cx="556" cy="349.2" r="3.85"/><circle cx="556" cy="351.8" r="3.85"/><circle cx="556" cy="354.4" r="3.85"/><circle cx="556" cy="357" r="3.85"/><circle cx="556" cy="359.6" r="3.85"/><circle cx="556" cy="361.8" r="3.85"/><circle cx="558.6" cy="344" r="3.85"/><circle cx="558.6" cy="346.6" r="3.85"/><circle cx="558.6" cy="349.2" r="3.85"/><circle cx="558.6" cy="351.8" r="3.85"/><circle cx="558.6" cy="354.4" r="3.85"/><circle cx="558.6" cy="357" r="3.85"/><circle cx="558.6" cy="359.6" r="3.85"/><circle cx="558.6" cy="361.9" r="3.85"/><circle cx="561.2" cy="344" r="3.85"/><circle cx="561.2" cy="346.6" r="3.85"/><circle cx="561.2" cy="349.2" r="3.85"/><circle cx="561.2" cy="351.8" r="3.85"/><circle cx="561.2" cy="354.4" r="3.85"/><circle cx="561.2" cy="357" r="3.85"/><circle cx="561.2" cy="359.6" r="3.85"/><circle cx="561.2" cy="360.4" r="3.85"/><circle cx="563.8" cy="344" r="3.85"/><circle cx="563.8" cy="346.6" r="3.85"/><circle cx="563.8" cy="349.2" r="3.85"/><circle cx="563.8" cy="351.8" r="3.85"/><circle cx="563.8" cy="354.4" r="3.85"/><circle cx="563.8" cy="357" r="3.85"/><circle cx="563.8" cy="357.1" r="3.85"/><circle cx="566.4" cy="344" r="3.85"/><circle cx="566.4" cy="346.6" r="3.85"/><circle cx="566.4" cy="349.2" r="3.85"/><circle cx="566.4" cy="351.8" r="3.85"/><circle cx="566.4" cy="353.9" r="3.85"/><circle cx="569" cy="344" r="3.85"/><circle cx="569" cy="346.6" r="3.85"/><circle cx="569" cy="349.2" r="3.85"/><circle cx="569" cy="351.2" r="3.85"/><circle cx="571.6" cy="344" r="3.85"/><circle cx="571.6" cy="346.6" r="3.85"/><circle cx="571.6" cy="349.2" r="3.85"/><circle cx="571.6" cy="349.3" r="3.85"/><circle cx="574.2" cy="344" r="3.85"/><circle cx="574.2" cy="346.6" r="3.85"/><circle cx="574.2" cy="347.5" r="3.85"/><circle cx="576.8" cy="344" r="3.85"/><circle cx="576.8" cy="346.6" r="3.85"/><circle cx="576.8" cy="347.1" r="3.85"/><circle cx="579.4" cy="344" r="3.85"/><circle cx="579.4" cy="346.6" r="3.85"/><circle cx="579.4" cy="346.8" r="3.85"/><circle cx="582" cy="344" r="3.85"/><circle cx="582" cy="346.5" r="3.85"/><circle cx="584.6" cy="344" r="3.85"/><circle cx="584.6" cy="346.2" r="3.85"/><circle cx="587.2" cy="344" r="3.85"/><circle cx="587.2" cy="345.8" r="3.85"/><circle cx="589.8" cy="344" r="3.85"/><circle cx="589.8" cy="345.3" r="3.85"/><circle cx="592.4" cy="344" r="3.85"/><circle cx="592.4" cy="344.8" r="3.85"/><circle cx="595" cy="344" r="3.85"/><circle cx="595" cy="344.4" r="3.85"/><circle cx="794.4" cy="383.5" r="3.85"/><circle cx="662.9" cy="348.75" r="3.85"/><circle cx="615.6" cy="341.9" r="3.85"/><circle cx="629.4" cy="343.5" r="3.85"/><circle cx="626.25" cy="348.1" r="3.85"/><circle cx="609.4" cy="356" r="3.85"/><circle cx="600.6" cy="367.1" r="3.85"/><circle cx="633.4" cy="380" r="3.85"/><circle cx="603.75" cy="410.25" r="3.85"/><circle cx="591.9" cy="380.7" r="3.85"/><circle cx="588.6" cy="385.6" r="3.85"/><circle cx="595.6" cy="343.1" r="3.85"/><circle cx="591.25" cy="344.4" r="3.85"/><circle cx="559.9" cy="442.1" r="3.85"/><circle cx="517.5" cy="386.25" r="3.85"/><circle cx="529.5" cy="394" r="3.85"/><circle cx="529.5" cy="400.6" r="3.85"/><circle cx="538.25" cy="403.75" r="3.85"/><circle cx="547.75" cy="379" r="3.85"/><circle cx="562.1" cy="382.25" r="3.85"/><circle cx="555" cy="372.5" r="3.85"/><circle cx="564.6" cy="370.25" r="3.85"/><circle cx="569.6" cy="369.4" r="3.85"/><circle cx="587.1" cy="366.9" r="3.85"/><circle cx="587.9" cy="372.1" r="3.85"/><circle cx="526.25" cy="376.6" r="3.85"/><circle cx="531.25" cy="377.5" r="3.85"/><circle cx="536.9" cy="375" r="3.85"/><circle cx="527.5" cy="372.5" r="3.85"/><circle cx="533.75" cy="371.9" r="3.85"/><circle cx="544.4" cy="367.1" r="3.85"/><circle cx="558.75" cy="364.75" r="3.85"/><circle cx="551.25" cy="361.9" r="3.85"/><circle cx="506.25" cy="368.75" r="3.85"/><circle cx="513.1" cy="368.1" r="3.85"/><circle cx="495.6" cy="363.1" r="3.85"/><circle cx="525" cy="367.5" r="3.85"/><circle cx="581.25" cy="358.5" r="3.85"/><circle cx="573.1" cy="356.25" r="3.85"/><circle cx="586.25" cy="351.25" r="3.85"/></g><g fill="#4e79a7"><circle cx="721.9" cy="246.4" r="3.85"/><circle cx="674" cy="272.1" r="3.85"/><circle cx="647" cy="289" r="3.85"/><circle cx="662" cy="287.25" r="3.85"/><circle cx="666" cy="291.25" r="3.85"/><circle cx="667.75" cy="300.1" r="3.85"/><circle cx="599" cy="310.3" r="3.85"/><circle cx="589.4" cy="320.6" r="3.85"/><circle cx="591.7" cy="323.1" r="3.85"/><circle cx="601.5" cy="323.9" r="3.85"/><circle cx="603.1" cy="332.1" r="3.85"/><circle cx="590" cy="329" r="3.85"/><circle cx="595.6" cy="333.1" r="3.85"/><circle cx="597.5" cy="339" r="3.85"/><circle cx="571" cy="322.9" r="3.85"/><circle cx="568.5" cy="324.6" r="3.85"/><circle cx="543.1" cy="333.75" r="3.85"/><circle cx="544.1" cy="337.1" r="3.85"/><circle cx="541.25" cy="341" r="3.85"/><circle cx="554.4" cy="338.1" r="3.85"/><circle cx="557.5" cy="339.75" r="3.85"/><circle cx="563.75" cy="334" r="3.85"/><circle cx="561.9" cy="336.9" r="3.85"/><circle cx="562.5" cy="340.25" r="3.85"/><circle cx="569.4" cy="341.25" r="3.85"/><circle cx="567.5" cy="337.5" r="3.85"/><circle cx="575" cy="333.75" r="3.85"/><circle cx="578.75" cy="330.6" r="3.85"/><circle cx="583.75" cy="331.9" r="3.85"/><circle cx="585" cy="335.6" r="3.85"/><circle cx="584.4" cy="339.4" r="3.85"/><circle cx="578.1" cy="340.6" r="3.85"/><circle cx="575" cy="338.1" r="3.85"/><circle cx="581.25" cy="337.5" r="3.85"/><circle cx="618.1" cy="326.25" r="3.85"/><circle cx="639" cy="325.4" r="3.85"/><circle cx="634.75" cy="329.4" r="3.85"/><circle cx="634" cy="332.1" r="3.85"/><circle cx="637.5" cy="332.1" r="3.85"/><circle cx="622.25" cy="335" r="3.85"/><circle cx="620" cy="336.25" r="3.85"/><circle cx="618.75" cy="338.75" r="3.85"/></g></svg>
<div class="t" style="left:0;top:520.00px;font-size:20.5px;color:#404040;-webkit-text-stroke:0.4px #fff;"><span style="position:absolute;left:222.84px;top:0;letter-spacing:0.392px">What</span> <span style="position:absolute;left:278.23px;top:0;letter-spacing:-0.263px">do</span> <span style="position:absolute;left:306.39px;top:0;letter-spacing:0.408px">they</span> <span style="position:absolute;left:352.89px;top:0;letter-spacing:-1.094px">buy</span> <span style="position:absolute;left:391.29px;top:0;letter-spacing:0.194px">the</span> <span style="position:absolute;left:426.62px;top:0;letter-spacing:0.987px">most</span></div>
<div class="t" style="left:434.50px;top:554.00px;font-size:12px;color:#484848;font-weight:bold;letter-spacing:-0.134px;-webkit-text-stroke:0.3px #fff;">Category</div>
<div class="r" style="left:302px;top:593px;width:312px;height:1px;background:#f2f2f2;"></div>
<div class="r" style="left:302px;top:622px;width:312px;height:1px;background:#f2f2f2;"></div>
<div class="r" style="left:302px;top:651px;width:312px;height:1px;background:#f2f2f2;"></div>
<div class="r" style="left:306px;top:568px;width:1px;height:113px;background:#ededed;"></div>
<div class="r" style="left:302px;top:680px;width:312px;height:1px;background:#ededed;"></div>
<div class="t" style="left:253.78px;top:588.00px;font-size:12px;color:#8c8c8c;letter-spacing:0.525px;">$60,000</div>
<div class="t" style="left:253.78px;top:617.00px;font-size:12px;color:#8c8c8c;letter-spacing:0.525px;">$40,000</div>
<div class="t" style="left:253.78px;top:646.00px;font-size:12px;color:#8c8c8c;letter-spacing:0.525px;">$20,000</div>
<div class="t" style="left:286.07px;top:666.00px;font-size:12px;color:#8c8c8c;letter-spacing:0.850px;">$0</div>
<div class="t" style="left:233.70px;top:622.90px;font-size:13px;color:#484848;font-weight:bold;-webkit-text-stroke:0.3px #fff;letter-spacing:-0.348px;transform:translate(-50%,-50%) rotate(-90deg);">Profit</div>
<div class="r" style="left:319px;top:669px;width:77px;height:11px;background:#4e79a7;"></div>
<div class="r" style="left:421.5px;top:614px;width:77.5px;height:66px;background:#4e79a7;"></div>
<div class="r" style="left:524.5px;top:573px;width:77px;height:107px;background:#4e79a7;"></div>
<div class="r" style="left:409px;top:681px;width:1px;height:4px;background:#ededed;"></div>
<div class="r" style="left:511px;top:681px;width:1px;height:4px;background:#ededed;"></div>
<div class="r" style="left:614px;top:681px;width:1px;height:4px;background:#ededed;"></div>
<div class="t" style="left:330.30px;top:686.00px;font-size:12px;color:#8c8c8c;letter-spacing:0.800px;">Furniture</div>
<div class="t" style="left:416.84px;top:686.00px;font-size:12px;color:#8c8c8c;letter-spacing:0.386px;">Office Supplies</div>
<div class="t" style="left:530.85px;top:686.00px;font-size:12px;color:#8c8c8c;letter-spacing:0.318px;">Technology</div>
<div class="t" style="left:881.70px;top:507.00px;font-size:12px;color:#505050;font-weight:bold;letter-spacing:-0.031px;-webkit-text-stroke:0.3px #fff;">Order Profitable?</div>
<div class="t" style="left:899.76px;top:524.00px;font-size:12px;color:#9a9a9a;letter-spacing:0.405px;">Unprofitable</div>
<div class="t" style="left:0;top:520.00px;font-size:20.5px;color:#404040;-webkit-text-stroke:0.4px #fff;"><span style="position:absolute;left:623.71px;top:0;letter-spacing:0.363px">How</span> <span style="position:absolute;left:670.31px;top:0;letter-spacing:-0.025px">Many</span> <span style="position:absolute;left:726.96px;top:0;letter-spacing:0.473px">Orders</span> <span style="position:absolute;left:797.24px;top:0;letter-spacing:-0.069px">Are</span> <span style="position:absolute;left:833.24px;top:0;letter-spacing:0.649px">Unprofitable</span> <span style="position:absolute;left:959.49px;top:0;letter-spacing:-1.250px">by</span></div>
<div class="t" style="left:624.34px;top:547.00px;font-size:20.5px;color:#404040;letter-spacing:0.134px;-webkit-text-stroke:0.4px #fff;">Category</div>
<div class="r" style="left:884px;top:524.3px;width:11px;height:10.7px;background:#bab0ac;"></div>
<div class="r" style="left:884px;top:541.4px;width:11px;height:10.8px;background:#6088b8;"></div>
<div class="t" style="left:899.20px;top:541.00px;font-size:12px;color:#777;letter-spacing:0.786px;">Profitable</div>
<div class="t" style="left:660.80px;top:582.00px;font-size:12px;color:#484848;font-weight:bold;letter-spacing:-0.062px;-webkit-text-stroke:0.3px #fff;">Category</div>
<div class="t" style="left:648.15px;top:602.00px;font-size:12px;color:#8c8c8c;letter-spacing:0.385px;">Technology</div>
<div class="t" style="left:626.84px;top:623.00px;font-size:12px;color:#8c8c8c;letter-spacing:0.386px;">Office Supplies</div>
<div class="t" style="left:658.30px;top:645.00px;font-size:12px;color:#8c8c8c;letter-spacing:0.812px;">Furniture</div>
<svg style="left:0;top:0" width="1024" height="772" viewBox="0 0 1024 772"><g stroke="#f3f3f3" stroke-width="1"><path d="M806.5 596V662.5M872.5 596V662.5M939.5 596V662.5M717.5 596V662.5M717 662H998"/></g><path d="M739.5 596V667" stroke="#e2e2e2" stroke-width="1" stroke-dasharray="1 1"/><g fill="#6088b8"><rect x="739.2" y="598" width="247.2" height="16.7"/><rect x="739.2" y="620.3" width="156.2" height="16.6"/><rect x="739.2" y="642.8" width="34.6" height="16.5"/></g><g fill="#bab0ac"><rect x="735.5" y="620.3" width="3.7" height="16.6"/><rect x="729.1" y="642.8" width="10.1" height="16.5"/></g></svg>
<div class="t" style="left:732.38px;top:671.00px;font-size:12px;color:#8c8c8c;letter-spacing:1.050px;">$0</div>
<div class="t" style="left:782.88px;top:671.00px;font-size:12px;color:#8c8c8c;letter-spacing:0.558px;">$20,000</div>
<div class="t" style="left:849.17px;top:671.00px;font-size:12px;color:#8c8c8c;letter-spacing:0.558px;">$40,000</div>
<div class="t" style="left:915.98px;top:671.00px;font-size:12px;color:#8c8c8c;letter-spacing:0.558px;">$60,000</div>
<div class="t" style="left:840.49px;top:693.00px;font-size:12px;color:#484848;font-weight:bold;letter-spacing:0.385px;-webkit-text-stroke:0.3px #fff;">Profit</div>
<svg style="left:879.4px;top:694.6px" width="9" height="9" viewBox="0 0 9 9"><g fill="#555"><rect x="0" y="0.2" width="7.6" height="1.5"/><rect x="0" y="3" width="7.6" height="1.3" fill="#777"/><rect x="0" y="5.6" width="2.8" height="1.5"/></g></svg>
</body></html>
